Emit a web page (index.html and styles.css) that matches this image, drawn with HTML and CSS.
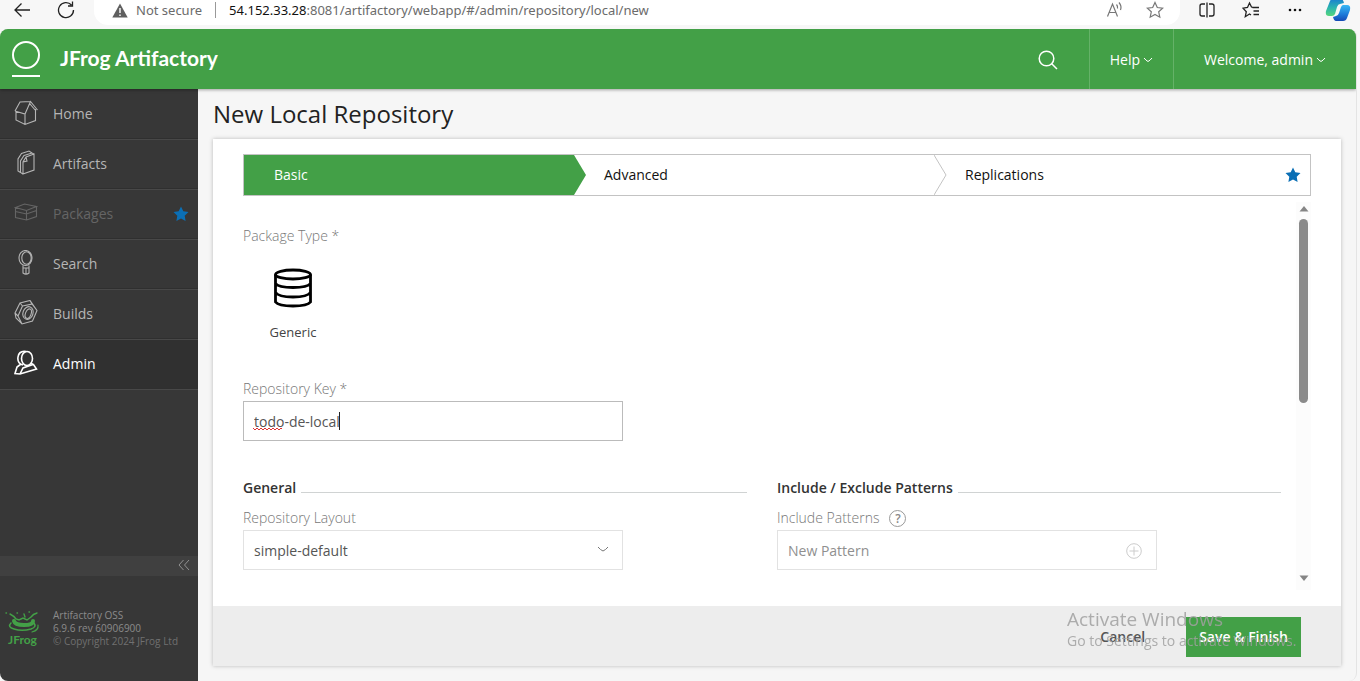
FILE: index.html
```html
<!DOCTYPE html>
<html lang="en">
<head>
<meta charset="utf-8">
<meta name="viewport" content="width=device-width, initial-scale=1">
<title>JFrog Artifactory</title>
<link rel="stylesheet" href="styles.css">
</head>
<body>
<div class="browser-bar">
  <div class="nav-buttons">
    <button type="button" class="icon-button" aria-label="Back"><svg width="18" height="18" viewBox="0 0 18 18"><path d="M17 9H2M8.500 2.500 2 9l6.500 6.500"/></svg></button>
    <button type="button" class="icon-button" aria-label="Refresh"><svg width="18" height="18" viewBox="0 0 18 18"><path d="M16.500 9A7.500 7.500 0 1 1 14.500 4M15.500 0.500V5H11"/></svg></button>
  </div>
  <div class="address-bar">
    <svg width="16" height="15" viewBox="0 0 16 15"><path d="M8 0.500 15.700 14.500H0.300Z" fill="#5f5f5f"/><path d="M8 5v5M8 11.500v1.500" stroke="#fff" stroke-width="1.400"/></svg>
    <span class="not-secure">Not secure</span>
    <span class="divider"></span>
    <span class="url"><b>54.152.33.28</b>:8081/artifactory/webapp/#/admin/repository/local/new</span>
    <button type="button" class="icon-button muted" aria-label="Read aloud"><svg width="18" height="18" viewBox="0 0 18 18"><path d="M1.500 15.500 6.500 3l5 12.500M3.200 11.500h6.600M10.500 3.500q1.500 1.800 1 4M13 1.500q3 3.500 1.500 7.500"/></svg></button>
    <button type="button" class="icon-button muted" aria-label="Add to favorites"><svg width="18" height="18" viewBox="0 0 18 18"><path d="m9 1.500 2.300 5 5.400.6-4 3.700 1.100 5.400L9 13.500l-4.800 2.700 1.100-5.400-4-3.700 5.400-.6Z"/></svg></button>
  </div>
  <div class="browser-tools">
    <button type="button" class="icon-button" aria-label="Split screen"><svg width="18" height="18" viewBox="0 0 18 18"><path d="M7 3H4Q2 3 2 5v8q0 2 2 2h3M9 1.500v15M11 3h3q2 0 2 2v8q0 2-2 2h-3"/></svg></button>
    <button type="button" class="icon-button" aria-label="Favorites"><svg width="18" height="18" viewBox="0 0 18 18"><path d="M11 6.500 9.500 6 7.500 2 5.500 6.500 1 7.200l3.300 3.500-1 5L7.500 13l1.500 1M10.500 6.500H17M11.500 10H17M11.500 13.500H17"/></svg></button>
    <button type="button" class="icon-button" aria-label="More"><svg width="18" height="18" viewBox="0 0 18 18"><g fill="#111" stroke="none"><circle cx="4" cy="9" r="1.300"/><circle cx="9" cy="9" r="1.300"/><circle cx="14" cy="9" r="1.300"/></g></svg></button>
    <button type="button" class="icon-button copilot" aria-label="Copilot"><svg width="26" height="24" viewBox="0 0 26 24">
      <defs><linearGradient id="cp1" x1="0" y1="0" x2="0" y2="1"><stop offset="0" stop-color="#1a7fd0"/><stop offset=".5" stop-color="#2ab3b0"/><stop offset="1" stop-color="#55d67c"/></linearGradient><linearGradient id="cp2" x1="0" y1="0" x2="0" y2="1"><stop offset="0" stop-color="#39b8f5"/><stop offset=".6" stop-color="#1b78d8"/><stop offset="1" stop-color="#1549b5"/></linearGradient></defs>
      <path d="M8 1h8q2 0 3 4l-4 1q-2 0-3 3l-2 7q-1 2-3 2H4q-4 0-3-5L5 3q1-2 3-2Z" fill="url(#cp1)" stroke="none"/>
      <path d="M18 7h4q4 0 3 5l-3 8q-1 3-4 3h-7q-2 0-3-4l3-1q2 0 3-3l2-6q1-2 2-2Z" fill="url(#cp2)" stroke="none"/></svg></button>
  </div>
</div>

<div class="app">
  <header class="app-header">
    <svg class="brand-mark" width="28" height="38" viewBox="0 0 28 38"><circle cx="14" cy="15" r="13" fill="none" stroke="#fff" stroke-width="2"/><path d="M0 36h28" stroke="#fff" stroke-width="2"/></svg>
    <span class="brand-name">JFrog Artifactory</span>
    <button type="button" class="header-search" aria-label="Search"><svg width="20" height="20" viewBox="0 0 20 20"><circle cx="8.500" cy="8.500" r="7.300"/><path d="m13.500 13.500 5.500 5.500"/></svg></button>
    <button type="button" class="header-item help">Help<svg width="10" height="6" viewBox="0 0 10 6"><path d="M1 1q2 2.500 4 3.500Q7 3.500 9 1"/></svg></button>
    <button type="button" class="header-item user">Welcome, admin<svg width="10" height="6" viewBox="0 0 10 6"><path d="M1 1q2 2.500 4 3.500Q7 3.500 9 1"/></svg></button>
  </header>

  <div class="app-body">
    <aside class="sidebar">
      <nav>
        <a href="#home" class="nav-item"><svg width="24" height="26" viewBox="0 0 24 26"><path d="M1 11 6 2l10.500-.5M1 11l10 3 5.500-12.500L23.500 10M2 11.500V20l9 4.500 10.500-4V9M11 14v10.500M14.500 5.500 16 4l6 7"/></svg><span>Home</span></a>
        <a href="#artifacts" class="nav-item"><svg width="24" height="26" viewBox="0 0 24 26"><path d="m9 24 11-4V4L12 7l-3 5ZM9 24l-2.500-1.500V11L10 5.500 18 3l2 1M6.500 22.500 4 21V9l3.500-5.500L15 1l3 2M9 12l4-1-1-4"/></svg><span>Artifacts</span></a>
        <a href="#packages" class="nav-item disabled"><svg width="24" height="26" viewBox="0 0 24 26"><path d="m1.500 7.500 9-3.500L22.500 6.500l-10 4ZM1.500 7.500v10L12.500 20l10-3.500v-10M12.500 10.500V20M1.500 11.500l11 2.500 10-3.500"/></svg><span>Packages</span><svg class="star" width="16" height="16" viewBox="0 0 16 16"><path d="m8 .5 2.300 4.800 5.200.7-3.800 3.700.9 5.300L8 12.500 3.400 15l.9-5.300L.5 6l5.200-.7Z"/></svg></a>
        <a href="#search" class="nav-item"><svg width="24" height="26" viewBox="0 0 24 26"><ellipse cx="11.500" cy="8" rx="6.500" ry="7.500"/><ellipse cx="12.500" cy="8" rx="4.700" ry="6.200"/><path d="M9 15.500V23q3 2.500 6 0v-7.500M9 18h6M12 18v6"/></svg><span>Search</span></a>
        <a href="#builds" class="nav-item"><svg width="24" height="26" viewBox="0 0 24 26"><path d="m1 13 5-10 10-2.500 7 10-4.500 10.500L8 24 2 18ZM6 3l2.500 3L4 16l4 8M8.500 6 18 4l-2-3.500M1 13l3 3M18 4l5 6.500"/><ellipse cx="14" cy="13" rx="5" ry="6.500" transform="rotate(20 14 13)"/><ellipse cx="14.500" cy="13.500" rx="2.800" ry="5" transform="rotate(20 14 13)"/></svg><span>Builds</span></a>
        <a href="#admin" class="nav-item active"><svg width="24" height="26" viewBox="0 0 24 26"><ellipse cx="13" cy="8.500" rx="5.500" ry="7"/><path d="M12 1.500Q5 .5 4 7T9 15M7 14l-4 3-2 6.500 5 .5 16.500-5-3-4.500-3-1.500M6 24l3-6 10-3.500"/></svg><span>Admin</span></a>
      </nav>
      <button type="button" class="collapse" aria-label="Collapse menu"><svg width="12" height="12" viewBox="0 0 12 12"><path d="M5.500 1 1 6l4.500 5M11 1 6.500 6l4.500 5"/></svg></button>
      <div class="about">
        <svg width="36" height="38" viewBox="0 0 36 38">
          <g fill="none" stroke="#43a047" stroke-width="1.600" stroke-linecap="round"><path d="M6 13q-4 4 3 6 8 2.500 17 0 6-2 3-6"/><path d="M9 11q1 4 10 4t9-4" stroke-width="4"/><path d="M5 4q4 2 6 5l3 1 4-2 4 2 4-3q2-3 6-4M19 4l1 3M1 3h.5M12 3h.5M24 2h.5" stroke-width="1.400"/><path d="M33 15q1 5-6 7" stroke-width="1.200"/></g>
          <text x="3" y="34" class="logo-text">JFrog</text></svg>
        <p>Artifactory OSS<br>6.9.6 rev 60906900<br><span>© Copyright 2024 JFrog Ltd</span></p>
      </div>
    </aside>

    <main class="main">
      <h1>New Local Repository</h1>
      <form class="card">
        <div class="card-body">
          <div class="wizard" role="tablist">
            <button type="button" class="step current" role="tab" aria-selected="true">Basic</button>
            <button type="button" class="step" role="tab">Advanced<svg class="chevron" width="13" height="40" viewBox="0 0 13 40"><path d="m0 0 12 20L0 40"/></svg></button>
            <button type="button" class="step" role="tab">Replications<svg class="star" width="16" height="16" viewBox="0 0 16 16"><path d="m8 .5 2.300 4.800 5.200.7-3.800 3.700.9 5.300L8 12.500 3.400 15l.9-5.300L.5 6l5.200-.7Z"/></svg></button>
          </div>
          <div class="scroll-row">
            <div class="fields">
              <div class="label">Package Type *</div>
              <button type="button" class="package-type">
                <svg width="40" height="40" viewBox="0 0 40 40"><ellipse cx="20" cy="6.500" rx="17.500" ry="4.500"/><path d="M2.500 6.500V34q3 4 17.500 4t17.500-4V6.500M2.500 15.500q3 4 17.500 4t17.500-4M2.500 24.500q3 4.500 17.500 4.500t17.500-4.500"/></svg>
                <span>Generic</span>
              </button>
              <label class="label" for="repo-key">Repository Key *</label>
              <div class="control key">
                <input id="repo-key" type="text" value="todo-de-local" spellcheck="false">
                <svg class="squiggle" width="32" height="4" viewBox="0 0 32 4"><path d="m0 1 2 2 2-2 2 2 2-2 2 2 2-2 2 2 2-2 2 2 2-2 2 2 2-2 2 2 2-2 1 1"/></svg>
                <span class="caret"></span>
              </div>
              <div class="columns">
                <section>
                  <h2>General</h2>
                  <label class="label" for="layout">Repository Layout</label>
                  <div class="control">
                    <select id="layout"><option>simple-default</option></select>
                    <svg class="select-arrow" width="12" height="7" viewBox="0 0 12 7"><path d="M1 1q2.500 3 5 4 2.500-1 5-4"/></svg>
                  </div>
                </section>
                <section>
                  <h2>Include / Exclude Patterns</h2>
                  <div class="label-row"><label class="label" for="pattern">Include Patterns</label><button type="button" class="hint" aria-label="Help">?</button></div>
                  <div class="control">
                    <input id="pattern" type="text" placeholder="New Pattern">
                    <button type="button" class="add" aria-label="Add pattern"><svg width="16" height="16" viewBox="0 0 16 16"><circle cx="8" cy="8" r="7.300"/><path d="M8 3.500v9M3.500 8h9"/></svg></button>
                  </div>
                </section>
              </div>
            </div>
            <div class="scrollbar" aria-hidden="true">
              <svg width="10" height="6" viewBox="0 0 10 6"><path d="M5 0 9.500 5.500h-9Z"/></svg>
              <span class="thumb"></span>
              <svg width="10" height="6" viewBox="0 0 10 6"><path d="M.5.5h9L5 6Z"/></svg>
            </div>
          </div>
        </div>
        <div class="card-footer">
          <button type="button" class="cancel">Cancel</button>
          <button type="submit" class="save">Save &amp; Finish</button>
        </div>
      </form>
    </main>
  </div>
</div>
<div class="watermark"><strong>Activate Windows</strong><span>Go to Settings to activate Windows.</span></div>
</body>
</html>
```
FILE: styles.css
```css
* { box-sizing: border-box; }

body {
  margin: 0;
  height: 100vh;
  display: flex;
  flex-direction: column;
  overflow: hidden;
  background: #f7f7f7;
  color: #333;
  font: 14px/20px "Open Sans", "Noto Sans", sans-serif;
}

button { border: 0; padding: 0; background: none; font: inherit; color: inherit; }
svg { flex: none; }

/* Browser bar */
.browser-bar { display: flex; height: 29px; flex: none; align-items: flex-start; }
.icon-button { display: flex; height: 20px; align-items: center; }
.icon-button svg { fill: none; stroke: #222; stroke-width: 1.3; }
.icon-button.muted svg { stroke: #777; stroke-width: 1.2; }
.nav-buttons { display: flex; gap: 26px; padding-left: 13px; width: 94px; }
.address-bar {
  flex: 1;
  display: flex;
  height: 25px;
  padding: 0 16px 5px 18px;
  align-items: center;
  background: #fff;
  border-radius: 0 0 14px 14px;
  font: 13px/20px "Noto Sans", sans-serif;
  color: #6b6b6b;
}
.not-secure { margin-left: 8px; }
.divider { width: 1px; height: 16px; margin: 0 13px; background: #999; }
.url { flex: 1; }
.url b { font-weight: 400; color: #111; }
.address-bar .icon-button { margin-left: 22px; }
.browser-tools { display: flex; gap: 26px; padding-left: 18px; width: 180px; }
.browser-tools .copilot { margin-left: -5px; }

/* Application frame */
.app {
  flex: 1;
  min-height: 0;
  margin-right: 3px;
  display: flex;
  flex-direction: column;
  overflow: hidden;
  background: #f6f6f6;
  border-right: 1px solid #e4e4e4;
  border-radius: 8px;
}
.app-header {
  position: relative;
  display: flex;
  height: 60px;
  flex: none;
  align-items: center;
  padding-left: 12px;
  background: #43a047;
  color: #fff;
  box-shadow: 0 1px 3px rgba(0, 0, 0, .35);
}
.brand-name { flex: 1; margin-left: 20px; padding-bottom: 2px; font: 700 21px/28px Lato, "Open Sans", sans-serif; }
.header-search { display: flex; margin: 2px 31px 0 0; }
.app-header button svg { fill: none; stroke: #fff; stroke-width: 1.5; }
.header-item {
  height: 100%;
  display: flex;
  align-items: center;
  gap: 3px;
  border-left: 1px solid #65b268;
}
.app-header .header-item svg { stroke-width: 1; }
.help { padding: 2px 20px 0 20px; }
.user { padding: 2px 30px 0 30px; }

.app-body { flex: 1; min-height: 0; display: flex; }

/* Sidebar */
.sidebar { width: 198px; flex: none; display: flex; flex-direction: column; background: #373737; }
.sidebar nav { flex: 1; padding-top: 1px; }
.nav-item {
  display: flex;
  height: 50px;
  align-items: center;
  gap: 15px;
  padding: 0 9px 2px 14px;
  color: #b5b5b5;
  text-decoration: none;
  border-bottom: 1px solid #484848;
  box-shadow: inset 0 -1px #2f2f2f;
}
.nav-item span { flex: 1; }
.nav-item svg { fill: none; stroke: currentColor; stroke-width: 1.1; }
.nav-item > svg:first-child { margin-bottom: 2px; }
.nav-item.disabled { color: #656565; }
.nav-item.active { color: #fff; background: #303030; }
.nav-item.active svg { stroke-width: 1.6; }
.nav-item .star, .star { fill: #0b6fb5; stroke: none; }
.collapse { display: flex; height: 20px; align-items: center; justify-content: flex-end; padding: 0 8px 2px 0; background: #404040; }
.collapse svg { fill: none; stroke: #919191; }
.about { display: flex; height: 105px; align-items: center; gap: 12px; padding-left: 5px; }
.about p { margin: 0; font-size: 10px; line-height: 13px; color: #8b8b8b; }
.about p span { color: #707070; }
.logo-text { font: 700 12px Lato, sans-serif; fill: #43a047; }

/* Page */
.main { flex: 1; min-width: 0; display: flex; flex-direction: column; padding: 9px 15px 15px; }
h1 { margin: 0 0 9px; font-size: 24px; line-height: 32px; font-weight: 500; color: #222; }
.card { flex: 1; min-height: 0; display: flex; flex-direction: column; background: #fff; box-shadow: 0 0 4px rgba(0, 0, 0, .25); }
.card-body { flex: 1; min-height: 0; display: flex; flex-direction: column; padding: 15px 30px 16px; }

.wizard { display: grid; grid-template-columns: 342fr 361fr 363fr; height: 42px; flex: none; border: 1px solid #c3c3c3; }
.step { display: flex; align-items: center; justify-content: space-between; padding-left: 18px; color: #111; }
.step.current {
  padding-left: 30px;
  background: #43a047;
  color: #fff;
  clip-path: polygon(0 0, calc(100% - 12px) 0, 100% 50%, calc(100% - 12px) 100%, 0 100%);
}
.step .star { margin-right: 9px; }
.chevron { fill: none; stroke: #c3c3c3; }

.scroll-row { flex: 1; min-height: 0; display: flex; margin-top: 6px; }
.fields { flex: 1; min-width: 0; padding: 24px 15px 0 0; }
.label { display: block; font-weight: 300; color: #777; }
.package-type {
  display: flex;
  flex-direction: column;
  align-items: center;
  gap: 14px;
  width: 100px;
  margin: 22px 0 37px;
  font-size: 13px;
  color: #444;
}
.package-type svg { fill: none; stroke: #000; stroke-width: 2.8; }
.control { position: relative; width: 380px; height: 40px; margin-top: 2px; }
.control input, .control select {
  appearance: none;
  width: 100%;
  height: 100%;
  padding: 0 10px;
  border: 1px solid #e2e2e2;
  border-radius: 0;
  background: #fff;
  color: #555;
  font: inherit;
  outline: 0;
}
.control select { padding-top: 2px; }
.control.key input { border-color: #bbb; }
.control input::placeholder { color: #8f8f8f; opacity: 1; }
.squiggle { position: absolute; left: 10px; top: 26px; fill: none; stroke: #d33; }
.caret { position: absolute; left: 96px; top: 11px; width: 1px; height: 18px; background: #222; }
.select-arrow { position: absolute; right: 14px; top: 16px; fill: none; stroke: #777; pointer-events: none; }
.add { position: absolute; right: 15px; top: 13px; display: flex; }
.add svg { fill: none; stroke: #ccc; }

.columns { display: grid; grid-template-columns: 1fr 1fr; gap: 30px; margin-top: 37px; }
h2 { display: flex; margin: 0 0 10px; font-size: 14px; line-height: 20px; font-weight: 600; color: #333; }
h2::after { content: ""; flex: 1; height: 1px; margin: 14px 0 0 5px; background: #d0d3d3; }
.label-row { display: flex; align-items: center; gap: 10px; height: 20px; }
.hint { width: 17px; height: 17px; border: 1px solid #999; border-radius: 50%; font-size: 12px; line-height: 15px; font-weight: 600; color: #888; }

.scrollbar { width: 15px; display: flex; flex-direction: column; align-items: center; padding: 4px 0 9px; background: #fcfcfc; }
.scrollbar svg { fill: #858585; }
.thumb { width: 9px; height: 49%; margin: 7px 0 auto; border-radius: 5px; background: #8b8b8b; }

.card-footer { display: flex; height: 60px; flex: none; align-items: center; justify-content: flex-end; gap: 41px; padding: 2px 40px 0 0; background: #ededed; }
.cancel { font-weight: 600; color: #555; }
.save { height: 40px; padding: 0 13px; background: #43a047; color: #fff; font-weight: 600; }

/* Desktop overlay */
.watermark { position: fixed; right: 57px; bottom: 30px; width: 236px; display: flex; flex-direction: column; color: rgba(160, 160, 160, .85); white-space: nowrap; pointer-events: none; }
.watermark strong { font-size: 19px; line-height: 24px; font-weight: 400; }
.watermark span { font-size: 14px; line-height: 20px; }
```
